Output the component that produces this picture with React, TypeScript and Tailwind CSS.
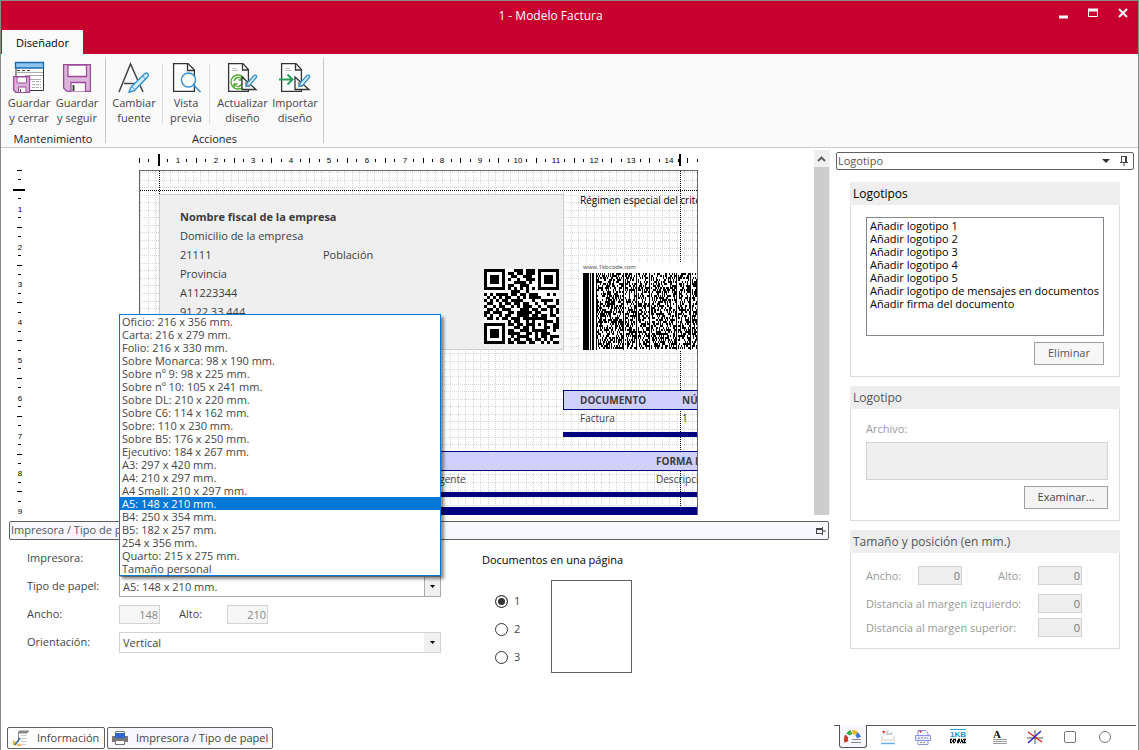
import { useState, type ReactNode } from "react";

const PAPER_TYPES = [
  "Oficio: 216 x 356 mm.",
  "Carta: 216 x 279 mm.",
  "Folio: 216 x 330 mm.",
  "Sobre Monarca: 98 x 190 mm.",
  "Sobre nº 9: 98 x 225 mm.",
  "Sobre nº 10: 105 x 241 mm.",
  "Sobre DL: 210 x 220 mm.",
  "Sobre C6: 114 x 162 mm.",
  "Sobre: 110 x 230 mm.",
  "Sobre B5: 176 x 250 mm.",
  "Ejecutivo: 184 x 267 mm.",
  "A3: 297 x 420 mm.",
  "A4: 210 x 297 mm.",
  "A4 Small: 210 x 297 mm.",
  "A5: 148 x 210 mm.",
  "B4: 250 x 354 mm.",
  "B5: 182 x 257 mm.",
  "254 x 356 mm.",
  "Quarto: 215 x 275 mm.",
  "Tamaño personal",
];

const LOGO_SLOTS = [
  "Añadir logotipo 1",
  "Añadir logotipo 2",
  "Añadir logotipo 3",
  "Añadir logotipo 4",
  "Añadir logotipo 5",
  "Añadir logotipo de mensajes en documentos",
  "Añadir firma del documento",
];

const QR_ROWS = [
  "1111111000111011101111111",
  "1000001011011011101000001",
  "1011101001100111001011101",
  "1011101010010011101011101",
  "1011101000111101001011101",
  "1000001011001110001000001",
  "1111111010101010101111111",
  "0000000001110010000000000",
  "1010111101101101110001010",
  "0101010110010101111000000",
  "1010101101111000100111101",
  "0110010110110110010010001",
  "1001011001010111001001110",
  "0110101110001110110110101",
  "1101110011011111011000101",
  "1010010110011110110110110",
  "0110101101110111111110001",
  "0000000010110010100011101",
  "1111111011011011101010011",
  "1000001000110110100011011",
  "1011101011001110111110010",
  "1011101011110011010111000",
  "1011101001011110010110111",
  "1000001010110011011010100",
  "1111111011011101100101011",
];

// one centimetre on the design surface
const CM = 37.8;

function seeded(seed: number) {
  let value = seed;
  return () => {
    value = (value * 1103515245 + 12345) % 2147483648;
    return value / 2147483648;
  };
}

function buildBarcode() {
  const rand = seeded(77);
  const solid = [40, 53, 66, 93, 107];
  const parts = ["M0 0h6v77h-6z", "M7 0h1v77h-1z", "M9 0h2v77h-2z", "M13 0h1v77h-1z"];
  solid.forEach((x) => parts.push(`M${x} 0h1v77h-1z`));
  for (let x = 14; x < 114; x += 1) {
    if (solid.includes(x) || solid.includes(x - 1)) continue;
    let on = rand() > 0.5;
    for (let y = 0; y < 76; y += 2) {
      if (rand() > 0.5) on = !on;
      if (on) parts.push(`M${x} ${y}h1v2h-1z`);
    }
  }
  return parts.join("");
}

const BARCODE_PATH = buildBarcode();
const QR_PATH = QR_ROWS.map((row, y) =>
  row
    .split("")
    .map((cell, x) => (cell === "1" ? `M${x} ${y}h1v1h-1z` : ""))
    .join(""),
).join("");

function HorizontalRuler() {
  const quarters = Array.from({ length: 60 }, (_, i) => i);
  return (
    <svg aria-hidden="true" className="h-5 w-[559px] shrink-0" shapeRendering="crispEdges">
      {quarters.map((q) => {
        const x = Math.round((q * CM) / 4) + 1;
        if (q === 2) return null;
        if (q % 4 === 0 && q > 0) {
          return (
            <text key={q} x={x} y="13" textAnchor="middle" fontSize="8" className="font-['Liberation_Sans']">
              {q / 4}
            </text>
          );
        }
        const tall = q % 2 === 0;
        return <rect key={q} x={x - 1} y={tall ? 8 : 9} width="1" height={tall ? 5 : 3} />;
      })}
      <rect x="19" y="4" width="2" height="12" />
      <rect x="540" y="4" width="2" height="12" />
    </svg>
  );
}

function VerticalRuler() {
  const quarters = Array.from({ length: 37 }, (_, i) => i);
  return (
    <svg aria-hidden="true" className="h-[365px] w-[138px] shrink-0" shapeRendering="crispEdges">
      {quarters.map((q) => {
        const y = Math.round((q * CM) / 4) + 21;
        if (q === 2) return null;
        if (q % 4 === 0 && q > 0) {
          return (
            <text key={q} x="19" y={y + 3} textAnchor="middle" fontSize="8" className="font-['Liberation_Sans']">
              {q / 4}
            </text>
          );
        }
        const tall = q % 2 === 0;
        return <rect key={q} x={tall ? 16 : 17} y={y - 1} width={tall ? 5 : 3} height="1" />;
      })}
      <rect x="12" y="39" width="12" height="2" />
    </svg>
  );
}

function PageGrid() {
  const step = CM / 5;
  const columns = Array.from({ length: 74 }, (_, i) => Math.round(i * step) + 0.5);
  const rows = Array.from({ length: 46 }, (_, i) => Math.round(i * step) + 1.5);
  return (
    <svg aria-hidden="true" className="absolute inset-0 h-full w-full" stroke="#d6d6d6" strokeDasharray="1 1">
      {columns.map((x) => (
        <path key={x} d={`M${x} 0V345`} />
      ))}
      {rows.map((y) => (
        <path key={y} d={`M0 ${y}H559`} />
      ))}
    </svg>
  );
}

function InvoicePage() {
  return (
    <div className="relative h-[345px] w-[559px] overflow-hidden border-x border-t border-[#666] bg-white text-[11px] leading-4 whitespace-nowrap text-[#3c3c3c]">
      <PageGrid />
      <svg aria-hidden="true" className="absolute inset-0 h-full w-full" stroke="#000" strokeDasharray="1 1">
        <path d="M19.5 0V345M540.5 0V345M0 19.5H558" />
      </svg>

      <div className="absolute top-[23px] left-[19px] h-[156px] w-[405px] border border-[#ccc] bg-[#efefef]">
        <div className="grid grid-cols-[143px_1fr] gap-y-[3px] pt-[14px] pl-5">
          <strong className="col-span-2">Nombre fiscal de la empresa</strong>
          <span className="col-span-2">Domicilio de la empresa</span>
          <span>21111</span>
          <span>Población</span>
          <span className="col-span-2">Provincia</span>
          <span className="col-span-2">A11223344</span>
          <span className="col-span-2">91 22 33 444</span>
        </div>
        <svg
          role="img"
          aria-label="QR"
          viewBox="0 0 25 25"
          className="absolute right-1 bottom-[5px] h-[75px] w-[75px] bg-white"
          shapeRendering="crispEdges"
        >
          <path d={QR_PATH} />
        </svg>
      </div>

      <p className="absolute top-[21px] left-[440px] text-[10px] text-black">Régimen especial del criterio de caja</p>

      <div className="absolute top-[92px] left-[440px] h-[88px] w-[120px] bg-white pl-[3px]">
        <p className="h-[10px] text-[6px] leading-[9px]">www.1kbcode.com</p>
        <svg aria-hidden="true" className="h-[77px] w-[114px]" shapeRendering="crispEdges">
          <path d={BARCODE_PATH} />
        </svg>
      </div>

      <div className="absolute top-[219px] left-[423px] w-[150px] text-[10px]">
        <div className="grid h-5 grid-cols-[102px_1fr] items-center border border-[#000080] bg-[#d0d0ff] pl-4 font-bold">
          <span>DOCUMENTO</span>
          <span>NÚMERO</span>
        </div>
        <div className="grid h-[22px] grid-cols-[102px_1fr] items-start pl-[17px]">
          <span>Factura</span>
          <span>1</span>
        </div>
        <div className="h-[5px] bg-[#000080]" />
      </div>

      <div className="absolute top-[280px] left-[19px] w-[560px] text-[10px]">
        <div className="grid h-5 grid-cols-[274px_1fr] items-center border-y border-[#000080] bg-[#d0d0ff] font-bold">
          <span className="col-start-2 pl-[223px]">FORMA DE PAGO</span>
        </div>
        <div className="grid h-[21px] grid-cols-[274px_223px_1fr] items-start">
          <span className="col-start-2">Agente</span>
          <span>Descripción</span>
        </div>
        <div className="h-[5px] bg-[#000080]" />
        <div className="mt-[10px] h-[9px] bg-[#000080]" />
      </div>
    </div>
  );
}

function SaveCloseIcon() {
  return (
    <svg aria-hidden="true" viewBox="0 0 32 32" className="size-8" fill="none">
      <path d="M3 1.500H30.500V29.500H3Z" fill="#fff" stroke="#333" />
      <path d="M2.500 1.500H30.500V7H2.500Z" fill="#8fc4ee" stroke="#1a6eb0" strokeWidth="1.300" />
      <path d="M4 9.500h3m2 0h3m2 0h3" stroke="#444" />
      <path d="M4 11.500h26M12 14.500h18M8 18.500h20" stroke="#aaa" />
      <path d="M19 20.500h9M19 23.500h9M19 26.500h9" stroke="#aaa" strokeDasharray="3 1" />
      <path d="M.7 15.700H16.500V31.500H3L.7 29Z" fill="#dcb6da" stroke="#9c4a9a" strokeWidth="1.300" />
      <path d="M4 16H13.500V22H4Z" fill="#fff" stroke="#9c4a9a" />
      <path d="M5.500 31.500V26H13V31.500Z" fill="#fff" stroke="#9c4a9a" />
      <path d="M7.500 28V31" stroke="#444" />
    </svg>
  );
}

function SaveIcon() {
  return (
    <svg aria-hidden="true" viewBox="0 0 32 32" className="size-8" fill="none" stroke="#9c4a9a" strokeWidth="1.300">
      <path d="M2.600 3.600H29.400V30.400H6L2.600 27Z" fill="#dcb6da" />
      <path d="M7 4H25.500V15.500H7Z" fill="#fff" />
      <path d="M10 30.400V21.500H24.500V30.400" fill="#fff" />
      <path d="M12.500 24V30" stroke="#444" strokeWidth="2" />
    </svg>
  );
}

function FontIcon() {
  return (
    <svg aria-hidden="true" viewBox="0 0 32 32" className="size-8" fill="none">
      <path d="M1 31L12.500 3L25 31M6 22.500H21" stroke="#444" strokeWidth="1.500" />
      <path d="M27 12.500c2-1.500 4.500 1 3 3L17 29c-2 2-3 1.500-6 2c1.500-2 1-4 2.500-5.500Z" fill="#d7ecfb" stroke="#2d8fd5" strokeWidth="1.300" />
      <path d="M24.500 15l3 3M14 25.500l3 3" stroke="#2d8fd5" />
    </svg>
  );
}

function PreviewIcon() {
  return (
    <svg aria-hidden="true" viewBox="0 0 32 32" className="size-8" fill="none">
      <path d="M3.600 2.600H18L24.400 9V30.400H3.600Z" fill="#fff" stroke="#333" strokeWidth="1.300" />
      <path d="M17.500 3V9.500H24" stroke="#333" strokeWidth="1.300" />
      <circle cx="18.500" cy="19" r="7" fill="#fff" stroke="#2d8fd5" strokeWidth="1.400" />
      <path d="M23.500 24l7 7" stroke="#2d8fd5" strokeWidth="1.600" />
    </svg>
  );
}

function DesignIcon({ children }: { children: ReactNode }) {
  return (
    <svg aria-hidden="true" viewBox="0 0 32 32" className="size-8" fill="none">
      <path d="M2.600 2.600H17L22.400 8.500V30.400H2.600Z" fill="#fff" stroke="#333" strokeWidth="1.300" />
      <path d="M16.500 3V9H22" stroke="#333" strokeWidth="1.300" />
      <path d="M6.500 7.500h4M6.500 9.500h6" stroke="#bbb" />
      {children}
      <path d="M16 16V28.500H30Z" fill="#fff" stroke="#333" strokeWidth="1.300" />
      <path d="M20 21V25H24" stroke="#333" />
      <path d="M28 14.500c1.500-1.200 3.500.5 2.300 2L24 24l-4 1.500L21.500 21.500Z" fill="#d7ecfb" stroke="#2d8fd5" strokeWidth="1.200" />
    </svg>
  );
}

function RibbonButton({ icon, lines }: { icon: ReactNode; lines: [string, string] }) {
  return (
    <button
      type="button"
      className="flex h-[66px] min-w-12 flex-col items-center text-[11px] leading-[15px] whitespace-nowrap text-[#444] hover:bg-[#e8e8ee]"
    >
      {icon}
      <span className="pt-[2px]">
        {lines[0]}
        <br />
        {lines[1]}
      </span>
    </button>
  );
}

function RibbonGroup({ title, children }: { title: string; children: ReactNode }) {
  return (
    <section className="my-1 flex flex-col justify-between border-r border-[#c8c8c8] px-1 pt-[3px] text-[11px]">
      <div className="flex">{children}</div>
      <h2 className="h-2 text-center leading-2 text-[#222]">{title}</h2>
    </section>
  );
}

function Ribbon() {
  return (
    <div className="flex h-[94px] border-b border-[#c8c8c8] bg-[#fafafa]">
      <RibbonGroup title="Mantenimiento">
        <RibbonButton icon={<SaveCloseIcon />} lines={["Guardar", "y cerrar"]} />
        <RibbonButton icon={<SaveIcon />} lines={["Guardar", "y seguir"]} />
      </RibbonGroup>
      <RibbonGroup title="Acciones">
        <RibbonButton icon={<FontIcon />} lines={["Cambiar", "fuente"]} />
        <div className="mx-1 my-[3px] w-px bg-[#dcdcdc]" />
        <div className="flex w-[38px] justify-center">
          <RibbonButton icon={<PreviewIcon />} lines={["Vista", "previa"]} />
        </div>
        <div className="mx-1 my-[3px] w-px bg-[#dcdcdc]" />
        <div className="flex w-[57px] justify-center">
          <RibbonButton
            icon={
              <DesignIcon>
                <g stroke="#4ea72e" strokeWidth="1.300">
                  <circle cx="12" cy="21" r="7" fill="#fff" />
                  <path d="M8 20c1-4 6-5 8-1M16 15.500V19H12.500M16 22c-1 4-6 5-8 1M8 26.500V23H11.500" />
                </g>
              </DesignIcon>
            }
            lines={["Actualizar", "diseño"]}
          />
        </div>
        <RibbonButton
          icon={
            <DesignIcon>
              <path d="M0 18.500H13M8.500 13.500L13.500 18.500L8.500 23.500" stroke="#2a9d5c" strokeWidth="2" />
            </DesignIcon>
          }
          lines={["Importar", "diseño"]}
        />
      </RibbonGroup>
    </div>
  );
}

function TitleBar() {
  return (
    <header className="flex h-[54px] flex-col justify-between border-t border-[#8a8a8a] bg-[#c8002d]">
      <div className="flex text-white">
        <h1 className="flex-1 pt-[7px] pl-[42px] text-center text-[12px] leading-4">1 - Modelo Factura</h1>
        <div className="flex w-20 gap-[14px] pt-[6px]">
          <button type="button" aria-label="Minimizar" className="size-4">
            <svg viewBox="0 0 16 16" fill="none" stroke="#fff">
              <path d="M1 10H10" strokeWidth="3" />
            </svg>
          </button>
          <button type="button" aria-label="Maximizar" className="size-4">
            <svg viewBox="0 0 16 16" fill="none" stroke="#fff">
              <path d="M.5 2V9.500H9.500V2" />
              <path d="M0 3H10" strokeWidth="3" />
            </svg>
          </button>
          <button type="button" aria-label="Cerrar" className="size-4">
            <svg viewBox="0 0 16 16" fill="none" stroke="#fff">
              <path d="M1 2L9 10M9 2L1 10" strokeWidth="2" />
            </svg>
          </button>
        </div>
      </div>
      <nav className="flex pl-px">
        <button type="button" className="h-6 w-[81px] bg-[#fafafa] pt-[2px] text-[11px] leading-4 text-black">
          Diseñador
        </button>
      </nav>
    </header>
  );
}

function PinIcon({ className }: { className?: string }) {
  return (
    <svg aria-hidden="true" viewBox="0 0 10 10" className={`size-[10px] ${className ?? ""}`} fill="none" stroke="#444">
      <path d="M2.500 1V6M2 .5H8M1 6.500H9M5 6.500V10" />
      <path d="M7 0V6" strokeWidth="2" />
    </svg>
  );
}

type ComboProps = {
  id: string;
  value: string;
  options: string[];
  strong?: boolean;
  onChange: (value: string) => void;
};

function Combo({ id, value, options, strong, onChange }: ComboProps) {
  return (
    <div className={`relative h-[21px] border ${strong ? "border-[#ababab]" : "border-[#d2d2d2]"}`}>
      <select
        id={id}
        value={value}
        onChange={(event) => onChange(event.target.value)}
        className="block h-full w-full appearance-none bg-white pl-[3px] leading-4 text-[#444]"
      >
        {options.map((option) => (
          <option key={option}>{option}</option>
        ))}
      </select>
      <div
        className={`pointer-events-none absolute inset-y-0 right-0 flex w-4 items-center justify-center bg-[#f0f0f0] ${
          strong ? "border-l border-[#ababab]" : ""
        }`}
      >
        <svg aria-hidden="true" viewBox="0 0 5 3" className="h-[3px] w-[5px]">
          <path d="M0 0H5L2.500 3Z" />
        </svg>
      </div>
    </div>
  );
}

function PrinterPanel() {
  const [paper, setPaper] = useState("A5: 148 x 210 mm.");
  const [orientation, setOrientation] = useState("Vertical");
  const [perPage, setPerPage] = useState(1);

  return (
    <>
      <div className="mt-[6px] mr-px ml-2 flex h-[19px] items-center justify-between rounded-[2px] border border-[#606060] bg-[#f7f7fd] px-px pr-[2px] text-[#555]">
        <span>Impresora / Tipo de papel</span>
        <PinIcon className="-rotate-90" />
      </div>
      <div className="flex pl-[26px] text-[#444]">
        <div className="grid grid-cols-[92px_322px] content-start items-center gap-y-[7px] pt-2">
          <label htmlFor="printer">Impresora:</label>
          <Combo id="printer" value="" options={[""]} onChange={() => {}} />

          <label htmlFor="paper">Tipo de papel:</label>
          <div className="relative">
            <Combo id="paper" value={paper} options={PAPER_TYPES} strong onChange={setPaper} />
            <ul
              role="listbox"
              aria-label="Tipo de papel"
              className="absolute bottom-full left-0 z-10 w-full border border-[#0078d7] bg-white shadow-[3px_3px_3px_rgba(0,0,0,0.45)]"
            >
              {PAPER_TYPES.map((type) => (
                <li
                  key={type}
                  role="option"
                  aria-selected={type === paper}
                  onClick={() => setPaper(type)}
                  className={`h-[13px] pl-[2px] leading-[13px] ${type === paper ? "bg-[#0078d7] text-white" : ""}`}
                >
                  {type}
                </li>
              ))}
            </ul>
          </div>

          <label htmlFor="paper-width">Ancho:</label>
          <div className="flex h-[21px] items-center">
            <input
              id="paper-width"
              disabled
              defaultValue="148"
              className="h-[19px] w-[41px] border border-[#d2d2d2] bg-[#f7f7f7] px-px text-right text-[#888]"
            />
            <label htmlFor="paper-height" className="ml-[19px] w-12">
              Alto:
            </label>
            <input
              id="paper-height"
              disabled
              defaultValue="210"
              className="h-[19px] w-[41px] border border-[#d2d2d2] bg-[#f7f7f7] px-px text-right text-[#888]"
            />
          </div>

          <label htmlFor="orientation">Orientación:</label>
          <Combo
            id="orientation"
            value={orientation}
            options={["Vertical", "Horizontal"]}
            onChange={setOrientation}
          />
        </div>

        <fieldset className="ml-[41px] pt-3">
          <legend className="float-left leading-4 text-black">Documentos en una página</legend>
          <div className="clear-both flex pt-3 pl-[13px]">
            <div className="flex w-14 flex-col gap-[14px] pt-[14px]">
              {[1, 2, 3].map((count) => (
                <label key={count} className="flex h-[14px] items-center gap-[6px]">
                  <input
                    type="radio"
                    name="per-page"
                    checked={perPage === count}
                    onChange={() => setPerPage(count)}
                    className="size-[13px] appearance-none rounded-full border border-[#333] bg-white checked:bg-[#333] checked:shadow-[inset_0_0_0_2px_#fff]"
                  />
                  {count}
                </label>
              ))}
            </div>
            <div className="h-[93px] w-[81px] border border-[#606060] bg-white" />
          </div>
        </fieldset>
      </div>
    </>
  );
}

function BottomTabs() {
  return (
    <div className="mt-auto flex gap-[2px] pb-px pl-[6px] text-[#444]">
      <button type="button" className="flex h-[22px] w-[98px] items-center gap-2 rounded-[2px] border border-[#606060] bg-white pl-[5px]">
        <svg aria-hidden="true" viewBox="0 0 16 16" className="size-4" fill="none">
          <path d="M6 1H16L14 3H6Z" fill="#888" stroke="#888" />
          <path d="M5.500 2V12" stroke="#888" />
          <path d="M8 5.500h6M8 8.500h6M8 11.500h6M8 14.500h5" stroke="#ccc" />
          <path d="M0 10l4 3-4 3zM3 16l3-3 3 3z" fill="#f2b04a" />
          <path d="M2 15L7 8" stroke="#3a6f9c" strokeWidth="1.500" />
        </svg>
        Información
      </button>
      <button type="button" className="flex h-[22px] w-[166px] items-center gap-2 rounded-[2px] border border-[#606060] bg-[#f7f7fd] pl-1">
        <svg aria-hidden="true" viewBox="0 0 16 16" className="size-4">
          <path d="M0 6h16v6H0z" fill="#777" />
          <path d="M3.500 1.500h9V6h-9zM3.500 10.500h9v4h-9z" fill="#fff" stroke="#777" />
          <path d="M3 3h10v5H3z" fill="#2f62cf" />
        </svg>
        Impresora / Tipo de papel
      </button>
    </div>
  );
}

function Group({ title, muted, children }: { title: string; muted?: boolean; children: ReactNode }) {
  return (
    <section className={`border border-[#dcdcdc] ${muted ? "text-[#999]" : "text-black"}`}>
      <h3 className={`-mx-px -mt-px h-[23px] bg-[#eee] pl-[3px] text-[12px] leading-6 ${muted ? "text-[#555]" : ""}`}>
        {title}
      </h3>
      {children}
    </section>
  );
}

function NumberBox({ id }: { id: string }) {
  return (
    <input
      id={id}
      disabled
      defaultValue="0"
      className="h-[19px] w-11 border border-[#d2d2d2] bg-[#efefef] px-px text-right text-[#777]"
    />
  );
}

function Sidebar() {
  return (
    <aside className="flex w-[308px] shrink-0 flex-col pt-1">
      <div className="mr-1 ml-[6px] flex h-[18px] items-center rounded-[2px] border border-[#606060] bg-white pr-1 pl-px text-[#555]">
        <span className="flex-1">Logotipo</span>
        <svg aria-hidden="true" viewBox="0 0 8 4" className="mr-[9px] h-1 w-2">
          <path d="M0 0H8L4 4Z" fill="#333" />
        </svg>
        <PinIcon />
      </div>

      <div className="mr-[18px] ml-5 flex flex-col gap-[9px] pt-3">
        <Group title="Logotipos">
          <div className="flex flex-col items-start px-[15px] pt-3 pb-[11px]">
            <select
              size={9}
              aria-label="Logotipos"
              className="h-[119px] w-[238px] appearance-none overflow-hidden border border-[#828790] bg-white pl-[3px] text-black"
            >
              {LOGO_SLOTS.map((slot) => (
                <option key={slot} className="h-[13px] min-h-0 p-0 leading-[13px]">
                  {slot}
                </option>
              ))}
            </select>
            <button
              type="button"
              className="mt-[6px] ml-[168px] h-[23px] w-[70px] border border-[#a0a0a0] bg-[#f7f7f7] text-[#555]"
            >
              Eliminar
            </button>
          </div>
        </Group>

        <Group title="Logotipo" muted>
          <div className="flex flex-col px-[15px] pt-3 pb-[11px]">
            <label htmlFor="logo-file" className="leading-4">
              Archivo:
            </label>
            <textarea
              id="logo-file"
              disabled
              className="mt-[5px] h-[38px] w-[242px] resize-none border border-[#d2d2d2] bg-[#efefef]"
            />
            <button
              type="button"
              className="mt-[6px] ml-[158px] h-[23px] w-[84px] border border-[#a0a0a0] bg-[#f4f4f4] text-[#444]"
            >
              Examinar...
            </button>
          </div>
        </Group>

        <Group title="Tamaño y posición (en mm.)" muted>
          <div className="ml-[15px] flex w-[231px] flex-col pt-[13px] pr-[15px] pb-[11px]">
            <div className="flex items-center">
              <label htmlFor="logo-width" className="w-[52px] pt-[2px]">
                Ancho:
              </label>
              <NumberBox id="logo-width" />
              <label htmlFor="logo-height" className="ml-9 flex-1 pt-[2px]">
                Alto:
              </label>
              <NumberBox id="logo-height" />
            </div>
            <div className="mt-[9px] flex items-center justify-between">
              <label htmlFor="margin-left" className="pt-[2px]">
                Distancia al margen izquierdo:
              </label>
              <NumberBox id="margin-left" />
            </div>
            <div className="mt-[5px] flex items-center justify-between">
              <label htmlFor="margin-top" className="pt-[2px]">
                Distancia al margen superior:
              </label>
              <NumberBox id="margin-top" />
            </div>
          </div>
        </Group>
      </div>

      <Toolbox />
    </aside>
  );
}

function ToolButton({ label, active, children }: { label: string; active?: boolean; children: ReactNode }) {
  return (
    <button
      type="button"
      aria-label={label}
      className={`flex h-[22px] shrink-0 items-center justify-center ${
        active ? "-mt-px h-[23px] w-7 rounded-b-[3px] border border-t-0 border-[#555] bg-[#f7f7fd]" : "w-[35px]"
      }`}
    >
      <svg viewBox="0 0 18 16" className="h-4 w-[18px]" fill="none">
        {children}
      </svg>
    </button>
  );
}

function Toolbox() {
  return (
    <div className="mt-auto mr-[2px] ml-1 flex h-[25px] border-t border-[#555] pl-[5px]">
      <ToolButton label="Logotipos" active>
        <path d="M2.500 14c-1-3-.5-5 .5-6" stroke="#d43a2a" strokeWidth="4" />
        <path d="M4 6.500c1-1.500 2-2 3.500-2.500" stroke="#39a845" strokeWidth="4" />
        <path d="M8.500 4c2 0 3 .5 4 2" stroke="#f4b400" strokeWidth="4" />
        <path d="M12.500 6c1.500 1 2 2 2.500 3.500" stroke="#3a78e0" strokeWidth="4" />
        <path d="M8 11.500h9M7 14.500h10" stroke="#888" />
      </ToolButton>
      <span className="w-[3px]" />
      <ToolButton label="Imagen">
        <path d="M3 2h3l-1 3z" fill="#d22" />
        <path d="M9 1l-2 3 2 1zM7 5.500H13V3.500" fill="#b4c4d4" stroke="#c4ccd4" />
        <path d="M3 12.500V7M15 12.500V7M4 11h10" stroke="#ccc" />
        <path d="M2 14.500h14" stroke="#6ab0e8" strokeWidth="1.500" />
      </ToolButton>
      <ToolButton label="Impresión">
        <path d="M4 6V1.500H11.500L14 4V6M4 11V15.500H14V11" stroke="#8a92d8" />
        <path d="M1.500 6.500H16.500V11.500H1.500Z" fill="#e8eaff" stroke="#8a92f0" />
        <path d="M4 9h10M6 13.500h6" stroke="#888" strokeDasharray="2 1" />
        <path d="M5 2h3l-1.500 2z" fill="#d22" />
      </ToolButton>
      <ToolButton label="Código 1KB">
        <path d="M1 .5h16" stroke="#28a8dc" />
        <text x="9" y="8" textAnchor="middle" fontSize="8" fontWeight="700" fill="#1894cc" className="font-['Liberation_Sans']">
          1KB
        </text>
        <path d="M1 10.500h2M4 10.500h3M9 10.500h2M12 10.500h1M14 10.500h3M1 12h1M3 12h2M6 12h1M8 12h3M12 12h2M15 12h1M1 13.500h2M4 13.500h2M8 13.500h2M11 13.500h1M13 13.500h4" stroke="#000" strokeWidth="1.500" />
      </ToolButton>
      <span className="w-[7px]" />
      <ToolButton label="Texto">
        <text x="6" y="9" textAnchor="middle" fontSize="11" fontWeight="700" fill="#111" className="font-['Liberation_Serif']">
          A
        </text>
        <path d="M2 10.500h14M2 12.500h14M2 14.500h14" stroke="#999" />
      </ToolButton>
      <ToolButton label="Línea">
        <path d="M9 1V15M1 9H17" stroke="#555" />
        <path d="M2 3L16 13" stroke="#d22" strokeWidth="1.400" />
        <path d="M15 2L2 14" stroke="#22c" strokeWidth="1.400" />
      </ToolButton>
      <ToolButton label="Rectángulo">
        <rect x="3.500" y="2.500" width="11" height="11" rx="1.500" stroke="#777" />
      </ToolButton>
      <ToolButton label="Elipse">
        <circle cx="9" cy="8" r="5.500" stroke="#777" />
      </ToolButton>
    </div>
  );
}

export default function App() {
  return (
    <div className="flex min-h-screen flex-col border-x border-[#8a8a8a] bg-white font-['Open_Sans',sans-serif] text-[11px] text-[#444]">
      <TitleBar />
      <Ribbon />
      <main className="flex flex-1">
        <div className="flex min-w-0 flex-1 flex-col">
          <div className="flex border-r border-[#f0f0f0] pt-[2px]">
            <VerticalRuler />
            <div className="flex-1">
              <HorizontalRuler />
              <InvoicePage />
            </div>
            <div className="flex w-[15px] flex-col">
              <div className="flex h-[17px] items-center justify-center bg-[#f0f0f0]">
                <svg aria-hidden="true" viewBox="0 0 9 6" className="h-[6px] w-[9px]" fill="none">
                  <path d="M1 5L4.500 1.500L8 5" stroke="#555" strokeWidth="1.800" />
                </svg>
              </div>
              <div className="flex-1 bg-[#cdcdcd]" />
            </div>
          </div>
          <PrinterPanel />
          <BottomTabs />
        </div>
        <Sidebar />
      </main>
    </div>
  );
}
